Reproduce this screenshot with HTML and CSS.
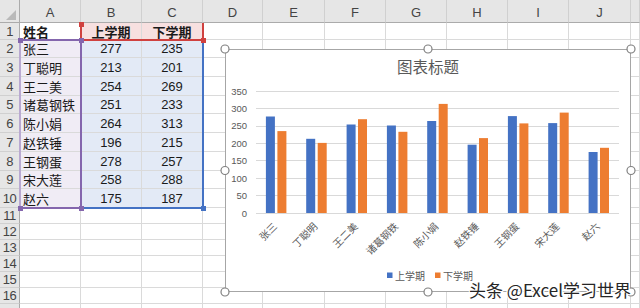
FILE: index.html
```html
<!DOCTYPE html>
<html lang="zh">
<head>
<meta charset="utf-8">
<title>Excel chart</title>
<link rel="stylesheet" href="styles.css">
</head>
<body>
<div class="sheet">
  <!-- header row -->
  <div class="h corner"><span class="tri"></span></div>
  <div class="h">A</div><div class="h">B</div><div class="h">C</div><div class="h">D</div><div class="h">E</div>
  <div class="h">F</div><div class="h">G</div><div class="h">H</div><div class="h">I</div><div class="h">J</div><div class="h"></div>

  <div class="rh">1</div><div class="c nm b">姓名</div><div class="c num b pk">上学期</div><div class="c num b pk">下学期</div>
  <div class="c"></div><div class="c"></div><div class="c"></div><div class="c"></div><div class="c"></div><div class="c"></div><div class="c"></div><div class="c"></div>

  <div class="rh">2</div><div class="c nm pu">张三</div><div class="c num bl">277</div><div class="c num bl">235</div>
  <div class="c"></div><div class="c"></div><div class="c"></div><div class="c"></div><div class="c"></div><div class="c"></div><div class="c"></div><div class="c"></div>

  <div class="rh">3</div><div class="c nm pu">丁聪明</div><div class="c num bl">213</div><div class="c num bl">201</div>
  <div class="c"></div><div class="c"></div><div class="c"></div><div class="c"></div><div class="c"></div><div class="c"></div><div class="c"></div><div class="c"></div>

  <div class="rh">4</div><div class="c nm pu">王二美</div><div class="c num bl">254</div><div class="c num bl">269</div>
  <div class="c"></div><div class="c"></div><div class="c"></div><div class="c"></div><div class="c"></div><div class="c"></div><div class="c"></div><div class="c"></div>

  <div class="rh">5</div><div class="c nm pu">诸葛钢铁</div><div class="c num bl">251</div><div class="c num bl">233</div>
  <div class="c"></div><div class="c"></div><div class="c"></div><div class="c"></div><div class="c"></div><div class="c"></div><div class="c"></div><div class="c"></div>

  <div class="rh">6</div><div class="c nm pu">陈小娟</div><div class="c num bl">264</div><div class="c num bl">313</div>
  <div class="c"></div><div class="c"></div><div class="c"></div><div class="c"></div><div class="c"></div><div class="c"></div><div class="c"></div><div class="c"></div>

  <div class="rh">7</div><div class="c nm pu">赵铁锤</div><div class="c num bl">196</div><div class="c num bl">215</div>
  <div class="c"></div><div class="c"></div><div class="c"></div><div class="c"></div><div class="c"></div><div class="c"></div><div class="c"></div><div class="c"></div>

  <div class="rh">8</div><div class="c nm pu">王钢蛋</div><div class="c num bl">278</div><div class="c num bl">257</div>
  <div class="c"></div><div class="c"></div><div class="c"></div><div class="c"></div><div class="c"></div><div class="c"></div><div class="c"></div><div class="c"></div>

  <div class="rh">9</div><div class="c nm pu">宋大莲</div><div class="c num bl">258</div><div class="c num bl">288</div>
  <div class="c"></div><div class="c"></div><div class="c"></div><div class="c"></div><div class="c"></div><div class="c"></div><div class="c"></div><div class="c"></div>

  <div class="rh">10</div><div class="c nm pu">赵六</div><div class="c num bl">175</div><div class="c num bl">187</div>
  <div class="c"></div><div class="c"></div><div class="c"></div><div class="c"></div><div class="c"></div><div class="c"></div><div class="c"></div><div class="c"></div>

  <div class="rh">11</div><div class="c"></div><div class="c"></div><div class="c"></div>
  <div class="c"></div><div class="c"></div><div class="c"></div><div class="c"></div><div class="c"></div><div class="c"></div><div class="c"></div><div class="c"></div>

  <div class="rh">12</div><div class="c"></div><div class="c"></div><div class="c"></div>
  <div class="c"></div><div class="c"></div><div class="c"></div><div class="c"></div><div class="c"></div><div class="c"></div><div class="c"></div><div class="c"></div>

  <div class="rh">13</div><div class="c"></div><div class="c"></div><div class="c"></div>
  <div class="c"></div><div class="c"></div><div class="c"></div><div class="c"></div><div class="c"></div><div class="c"></div><div class="c"></div><div class="c"></div>

  <div class="rh">14</div><div class="c"></div><div class="c"></div><div class="c"></div>
  <div class="c"></div><div class="c"></div><div class="c"></div><div class="c"></div><div class="c"></div><div class="c"></div><div class="c"></div><div class="c"></div>

  <div class="rh">15</div><div class="c"></div><div class="c"></div><div class="c"></div>
  <div class="c"></div><div class="c"></div><div class="c"></div><div class="c"></div><div class="c"></div><div class="c"></div><div class="c"></div><div class="c"></div>

  <div class="rh">16</div><div class="c"></div><div class="c"></div><div class="c"></div>
  <div class="c"></div><div class="c"></div><div class="c"></div><div class="c"></div><div class="c"></div><div class="c"></div><div class="c"></div><div class="c"></div>

  <div class="rh"></div><div class="c"></div><div class="c"></div><div class="c"></div>
  <div class="c"></div><div class="c"></div><div class="c"></div><div class="c"></div><div class="c"></div><div class="c"></div><div class="c"></div><div class="c"></div>

  <!-- range highlights (overlays) -->
  <div class="sel sel-blue"></div>
  <div class="sel sel-purple"></div>
  <div class="sel sel-red"></div>
  <span class="knob k-red1"></span>
  <span class="knob k-red2"></span>
  <span class="knob k-pu1"></span>
  <span class="knob k-pu2"></span>
  <span class="knob k-pu3"></span>
  <span class="knob k-pu4"></span>
  <span class="knob k-bl1"></span>

  <!-- chart object -->
  <div class="chart">
    <svg width="406" height="243" viewBox="225 49 406 243" xmlns="http://www.w3.org/2000/svg">
      <rect x="225.5" y="49.5" width="405" height="242" fill="#ffffff" stroke="#a6a6a6" stroke-width="1"/>
      <text class="title" x="428" y="73" text-anchor="middle">图表标题</text>
      <g stroke="#d9d9d9" stroke-width="1">
        <line x1="256" x2="619" y1="91.5" y2="91.5"/>
        <line x1="256" x2="619" y1="108.5" y2="108.5"/>
        <line x1="256" x2="619" y1="126.5" y2="126.5"/>
        <line x1="256" x2="619" y1="143.5" y2="143.5"/>
        <line x1="256" x2="619" y1="160.5" y2="160.5"/>
        <line x1="256" x2="619" y1="178.5" y2="178.5"/>
        <line x1="256" x2="619" y1="195.5" y2="195.5"/>
        <line x1="256" x2="619" y1="213.5" y2="213.5"/>
      </g>
      <g class="ylab" text-anchor="end">
        <text x="247" y="91">350</text>
        <text x="247" y="108.4">300</text>
        <text x="247" y="125.9">250</text>
        <text x="247" y="143.3">200</text>
        <text x="247" y="160.7">150</text>
        <text x="247" y="178.1">100</text>
        <text x="247" y="195.6">50</text>
        <text x="247" y="213">0</text>
      </g>
      <g fill="#4472c4">
        <rect x="265.9" y="116.5" width="9" height="96.5"/>
        <rect x="306.2" y="138.8" width="9" height="74.2"/>
        <rect x="346.6" y="124.5" width="9" height="88.5"/>
        <rect x="386.9" y="125.5" width="9" height="87.5"/>
        <rect x="427.2" y="121" width="9" height="92"/>
        <rect x="467.6" y="144.7" width="9" height="68.3"/>
        <rect x="507.9" y="116.1" width="9" height="96.9"/>
        <rect x="548.2" y="123.1" width="9" height="89.9"/>
        <rect x="588.6" y="152" width="9" height="61"/>
      </g>
      <g fill="#ed7d31">
        <rect x="277.4" y="131.1" width="9" height="81.9"/>
        <rect x="317.7" y="142.9" width="9" height="70.1"/>
        <rect x="358" y="119.2" width="9" height="93.8"/>
        <rect x="398.4" y="131.8" width="9" height="81.2"/>
        <rect x="438.7" y="103.9" width="9" height="109.1"/>
        <rect x="479" y="138.1" width="9" height="74.9"/>
        <rect x="519.4" y="123.4" width="9" height="89.6"/>
        <rect x="559.7" y="112.6" width="9" height="100.4"/>
        <rect x="600" y="147.8" width="9" height="65.2"/>
      </g>
      <g class="xlab" text-anchor="end">
        <text x="274.7" y="224" transform="rotate(-45 274.7 224)">张三</text>
        <text x="315" y="224" transform="rotate(-45 315 224)">丁聪明</text>
        <text x="355.3" y="224" transform="rotate(-45 355.3 224)">王二美</text>
        <text x="395.7" y="224" transform="rotate(-45 395.7 224)">诸葛钢铁</text>
        <text x="436" y="224" transform="rotate(-45 436 224)">陈小娟</text>
        <text x="476.3" y="224" transform="rotate(-45 476.3 224)">赵铁锤</text>
        <text x="516.7" y="224" transform="rotate(-45 516.7 224)">王钢蛋</text>
        <text x="557" y="224" transform="rotate(-45 557 224)">宋大莲</text>
        <text x="597.3" y="224" transform="rotate(-45 597.3 224)">赵六</text>
      </g>
      <rect x="387" y="272.5" width="5.5" height="5.5" fill="#4472c4"/>
      <text class="leg" x="395" y="275.5">上学期</text>
      <rect x="435" y="272.5" width="5.5" height="5.5" fill="#ed7d31"/>
      <text class="leg" x="443" y="275.5">下学期</text>
      <g fill="#ffffff" stroke="#808080" stroke-width="1.2">
        <circle cx="225" cy="49" r="4"/>
        <circle cx="428" cy="49" r="4"/>
        <circle cx="631" cy="49" r="4"/>
        <circle cx="225" cy="170.5" r="4"/>
        <circle cx="631" cy="170.5" r="4"/>
        <circle cx="225" cy="292" r="4"/>
        <circle cx="428" cy="292" r="4"/>
        <circle cx="631" cy="292" r="4"/>
      </g>
    </svg>
  </div>

  <div class="watermark">头条 @Excel学习世界</div>
</div>
</body>
</html>
```

FILE: styles.css
```css
* { box-sizing: border-box; }
html, body { margin: 0; padding: 0; background: #ffffff; }
body {
  font-family: "Liberation Sans", "Noto Sans CJK SC", sans-serif;
  font-size: 13px;
  color: #1a1a1a;
}
.sheet {
  position: relative;
  width: 640px;
  height: 308px;
  overflow: hidden;
  display: grid;
  grid-template-columns: 20px 61px 61px 61px 60px 62px 61px 61px 61px 61px 62px 9px;
  grid-template-rows: 23px 17px 18px 19px 19px 18px 19px 19px 19px 18px 19px 16px 16px 16px 16px 16px 16px 16px;
}
.h {
  background: #e6e6e6;
  border-right: 1px solid #d0d0d0;
  border-bottom: 1px solid #ababab;
  display: flex;
  align-items: center;
  justify-content: center;
  color: #444444;
  font-size: 13px;
  padding-top: 2px;
}
.corner { position: relative; border-right: 1px solid #ababab; }
.tri {
  position: absolute;
  right: 3px;
  bottom: 2px;
  width: 0;
  height: 0;
  border-left: 10px solid transparent;
  border-bottom: 10px solid #b9b9b9;
}
.rh {
  background: #e6e6e6;
  border-right: 1px solid #ababab;
  border-bottom: 1px solid #d0d0d0;
  display: flex;
  align-items: center;
  justify-content: center;
  color: #444444;
  font-size: 13px;
  letter-spacing: -0.5px;
}
.c {
  border-right: 1px solid #dadada;
  border-bottom: 1px solid #dadada;
  display: flex;
  align-items: center;
  white-space: nowrap;
  overflow: hidden;
}
.nm { padding-left: 3px; }
.num { justify-content: center; }
.b { font-weight: bold; }
.pk { background: #f7e0e0; }
.pu { background: #f0ecf5; }
.bl { background: #e3eaf6; }

.sel { position: absolute; pointer-events: none; }
.sel-blue { left: 80px; top: 39px; width: 124px; height: 170px; border: 2px solid #4472c4; }
.sel-purple { left: 19px; top: 39px; width: 63px; height: 170px; border: 2px solid #8466ad; border-left-color: #b9a9d1; }
.sel-red { left: 80px; top: 23px; width: 124px; height: 18px; border: 2px solid #d0413f; border-top: none; }
.knob { position: absolute; width: 5px; height: 5px; }
.k-red1 { left: 79px; top: 22px; background: #d0413f; }
.k-red2 { left: 201px; top: 38px; background: #d0413f; }
.k-pu1 { left: 18px; top: 38px; background: #8466ad; }
.k-pu2 { left: 79px; top: 38px; background: #8466ad; }
.k-pu3 { left: 18px; top: 206px; background: #8466ad; }
.k-pu4 { left: 79px; top: 206px; background: #8466ad; }
.k-bl1 { left: 201px; top: 206px; background: #4472c4; }

.chart {
  position: absolute;
  left: 225px;
  top: 49px;
  width: 406px;
  height: 243px;
}
.chart svg { display: block; overflow: visible; }
.title {
  font-family: "Noto Sans CJK SC", sans-serif;
  font-size: 15.5px;
  fill: #595959;
}
.ylab text {
  font-family: "Liberation Sans", "Noto Sans CJK SC", sans-serif;
  font-size: 9.5px;
  fill: #595959;
  dominant-baseline: central;
}
.xlab text, .leg {
  font-family: "Noto Sans CJK SC", sans-serif;
  font-size: 10px;
  fill: #595959;
  dominant-baseline: central;
}
.watermark {
  position: absolute;
  left: 469px;
  top: 278px;
  font-family: "Noto Sans CJK SC", sans-serif;
  font-size: 17px;
  line-height: 24px;
  color: #262626;
  white-space: nowrap;
  text-shadow: 1px 0 0 #fff, -1px 0 0 #fff, 0 1px 0 #fff, 0 -1px 0 #fff, 1px 1px 0 #fff, -1px -1px 0 #fff, 1px -1px 0 #fff, -1px 1px 0 #fff;
}
```
